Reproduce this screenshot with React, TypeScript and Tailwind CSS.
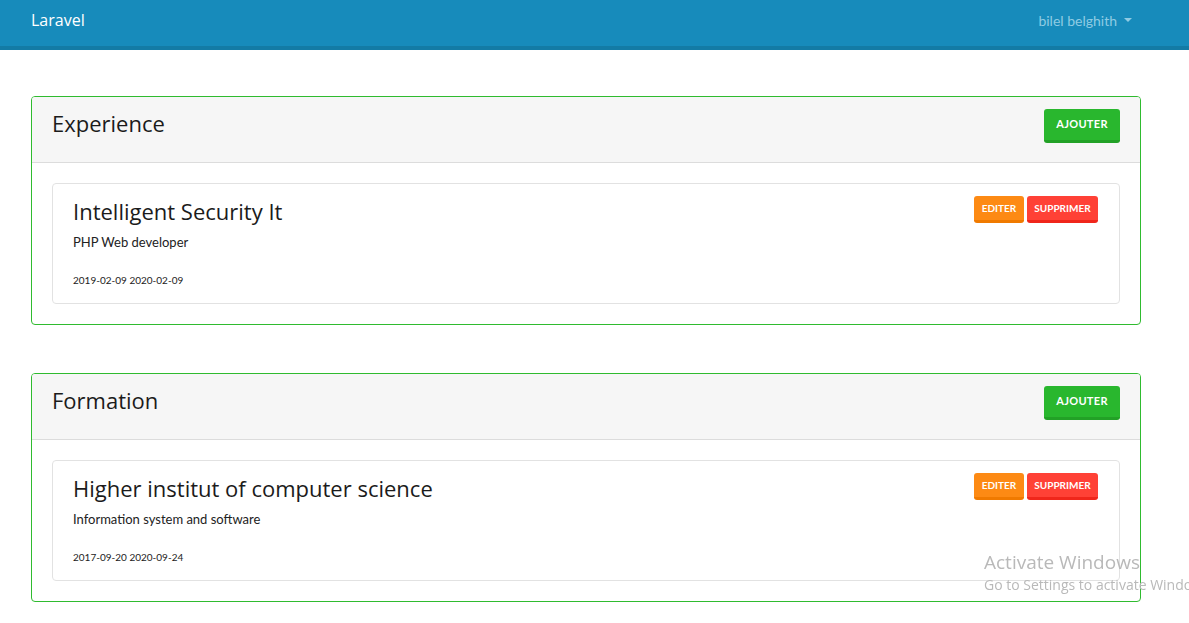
const sections = [
  {
    title: 'Experience',
    items: [
      { name: 'Intelligent Security It', sub: 'PHP Web developer', from: '2019-02-09', to: '2020-02-09' },
    ],
  },
  {
    title: 'Formation',
    items: [
      { name: 'Higher institut of computer science', sub: 'Information system and software', from: '2017-09-20', to: '2020-09-24' },
    ],
  },
];

function Navbar() {
  return (
    <nav className="h-[50px] bg-[#178bbb] border-b-[4px] border-[#137ba5] flex items-center justify-between pl-[31px] pr-[57px] pb-[6px]">
      <span className="text-white text-[16px] font-['Open_Sans',sans-serif]">Laravel</span>
      <span className="flex items-center gap-[7px] text-[#8fcbe3] text-[14px] font-['Lato',sans-serif]">
        bilel belghith
        <span className="w-0 h-0 border-x-[4px] border-x-transparent border-t-[4px] border-t-[#8fcbe3]" />
      </span>
    </nav>
  );
}

export default function App() {
  return (
    <div className="min-h-[623px] bg-white font-['Lato',sans-serif] text-[#222]">
      <Navbar />
      <main className="px-[31px] pt-[46px] flex flex-col gap-[48px] w-[1172px]">
        {sections.map((section) => (
          <div key={section.title} className="border border-[#2fbb2f] rounded-[4px] overflow-hidden">
            <div className="h-[66px] bg-[#f6f6f6] border-b border-[#dcdcdc] flex items-center justify-between px-[20px]">
              <h2 className="text-[22px] text-[#1b1b1b] font-['Open_Sans',sans-serif] -mt-[12px]">{section.title}</h2>
              <button className="h-[34px] w-[76px] rounded-[3px] bg-[#29b72e] border-b-[3px] border-[#22a126] text-white text-[11px] font-bold tracking-[0.3px] -mt-[8px]">
                AJOUTER
              </button>
            </div>
            <div className="p-[20px]">
              {section.items.map((item) => (
                <div key={item.name} className="border border-[#e2e2e2] rounded-[4px] h-[121px] px-[20px] pt-[10px] flex justify-between">
                  <div className="flex flex-col">
                    <h3 className="text-[22px] leading-[34px] text-[#1b1b1b] font-['Open_Sans',sans-serif]">{item.name}</h3>
                    <p className="text-[13px] mt-[5px] text-[#222]">{item.sub}</p>
                    <p className="text-[10px] mt-[20px] text-[#222]">{item.from} {item.to}</p>
                  </div>
                  <div className="flex gap-[3px] pt-[2px] pr-[1px]">
                    <button className="h-[27px] w-[50px] rounded-[3px] bg-[#fd8a14] border-b-[3px] border-[#f07a00] text-white text-[10px] font-bold">
                      EDITER
                    </button>
                    <button className="h-[27px] w-[71px] rounded-[3px] bg-[#ff4136] border-b-[3px] border-[#f0261b] text-white text-[10px] font-bold">
                      SUPPRIMER
                    </button>
                  </div>
                </div>
              ))}
            </div>
          </div>
        ))}
      </main>
      <div className="fixed left-[984px] top-[550px] text-[#b9b9b9] font-['Open_Sans',sans-serif] whitespace-nowrap pointer-events-none">
        <div className="text-[19px] leading-[24px]">Activate Windows</div>
        <div className="text-[14px] leading-[22px]">Go to Settings to activate Windows.</div>
      </div>
    </div>
  );
}
